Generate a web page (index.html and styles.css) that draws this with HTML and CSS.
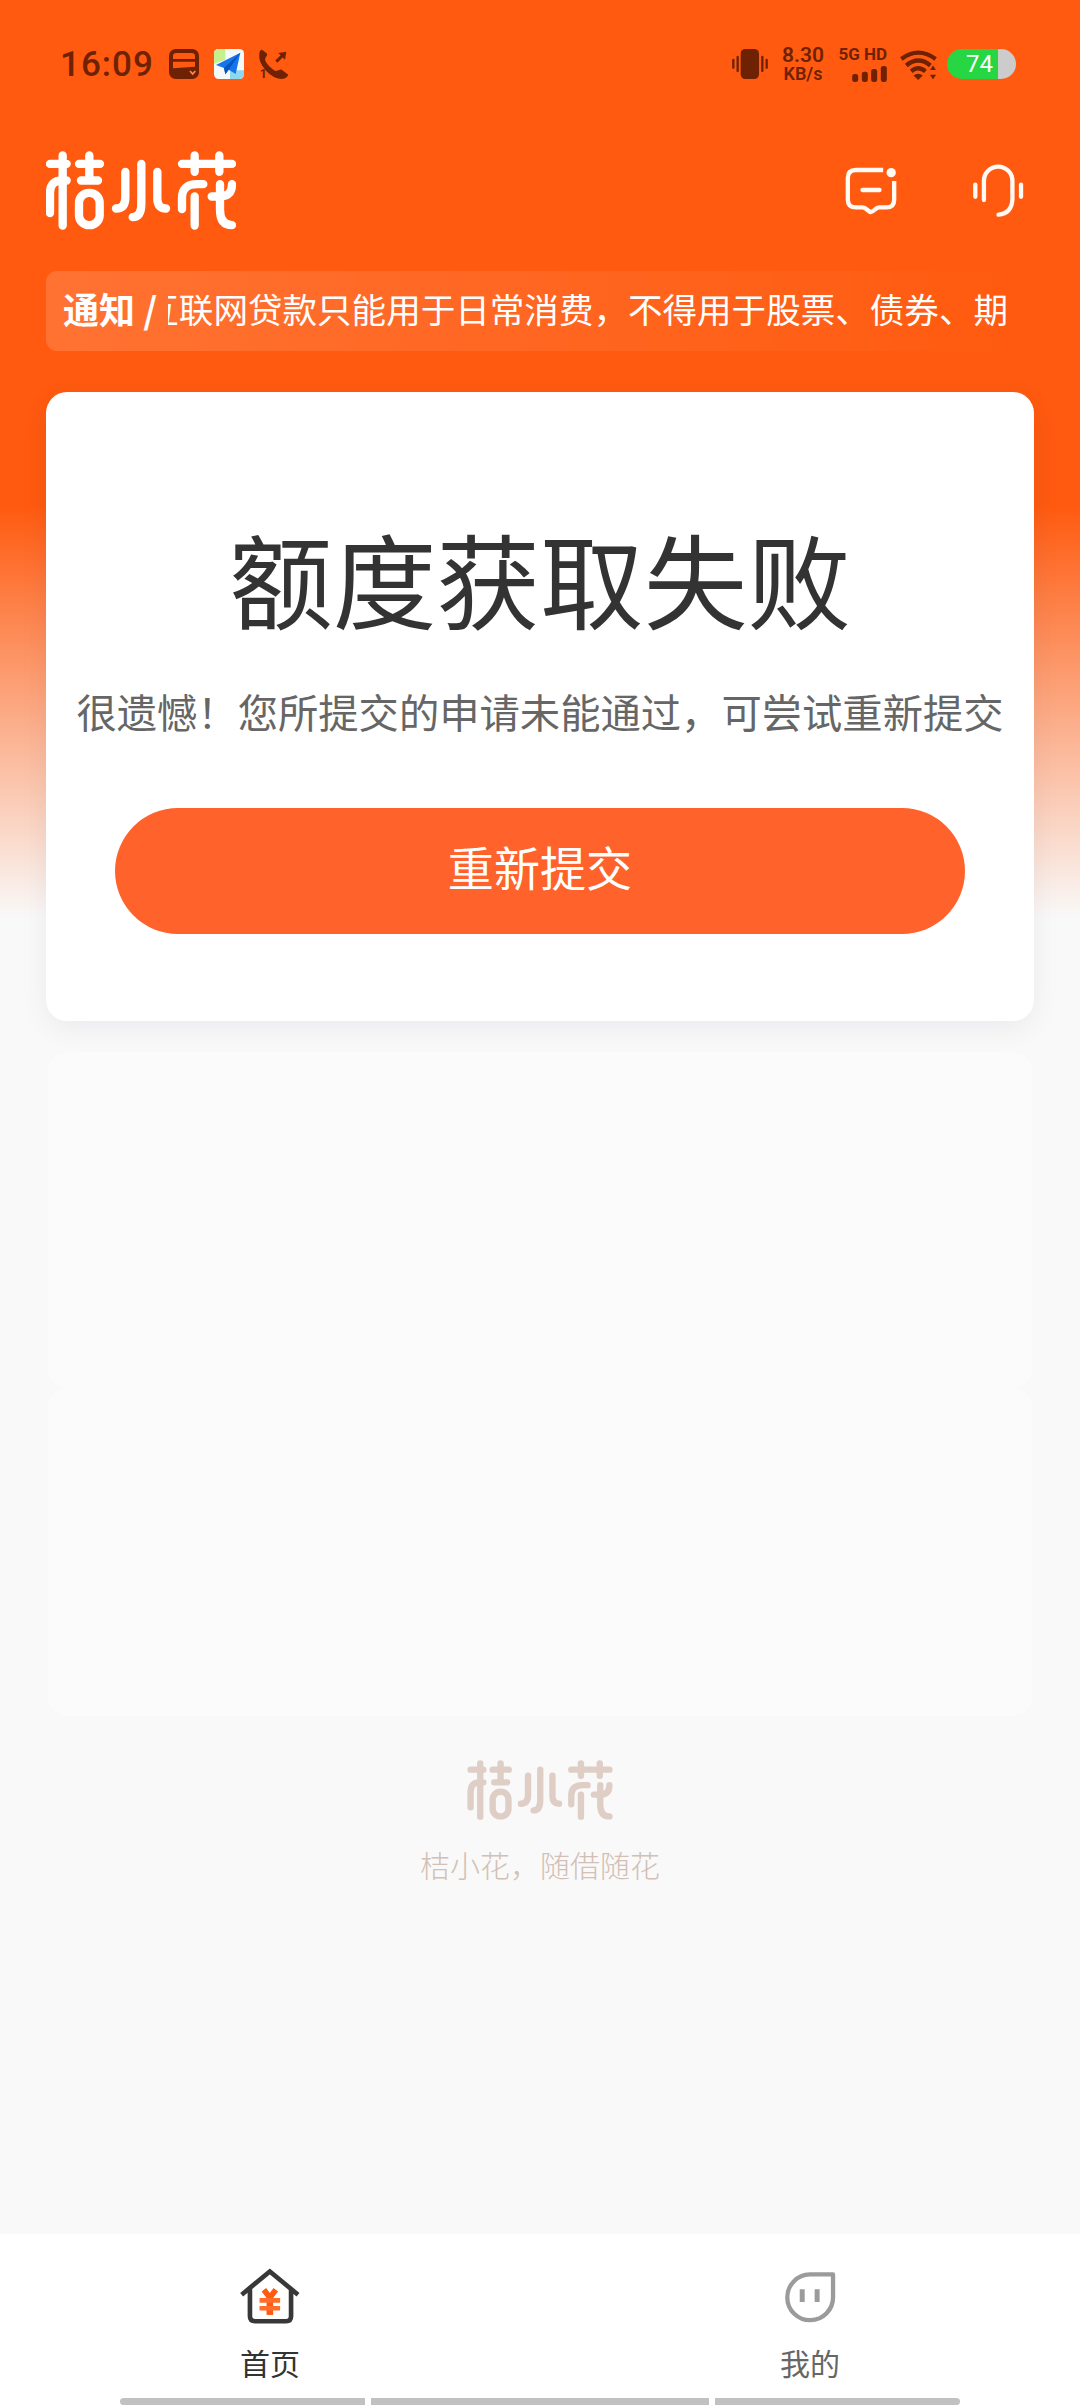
FILE: index.html
```html
<!DOCTYPE html>
<html lang="zh-CN">
<head>
<meta charset="utf-8">
<title>桔小花</title>
<link rel="stylesheet" href="styles.css">
</head>
<body>
<svg class="defs" aria-hidden="true">
  <symbol id="brand" viewBox="48 32 570 236">
    <g fill="none" stroke="currentColor" stroke-width="25" stroke-linecap="round" stroke-linejoin="round">
      <path d="M60 70H110M98 45V255M110 120H96Q60 120 60 158V218"/>
      <path d="M147 70H210M178 45V118M153 120H204"/>
      <rect x="147" y="157" width="62" height="97" rx="30"/>
      <path d="M286 94V170Q286 204 258 204M334 70V190Q334 230 308 230M382 94V174Q382 204 408 204"/>
      <path d="M456 70H606M494 45V94M568 45V94M520 131H502Q456 131 456 172V206M494 168V255"/>
      <path d="M570 131V208Q570 254 606 254M606 131Q606 168 570 168H545"/>
    </g>
  </symbol>
</svg>
<div class="page">
  <div class="status">
    <span class="clock">16:09</span>
    <svg class="ic-card" viewBox="0 0 90 90"><rect width="90" height="90" rx="20" fill="#6f2203"/><path d="M12 30V22Q12 12 22 12H68Q78 12 78 22V30ZM12 38H78V53L12 58Z" fill="#ff5a0f"/><path d="M63 66L71 75L79 66" fill="none" stroke="#ff8a50" stroke-width="5"/></svg>
    <svg class="ic-nav" viewBox="0 0 90 90"><rect width="90" height="90" rx="14" fill="#f4fafa"/><path d="M14 0H34V32L0 44V14Q0 0 14 0Z" fill="#c4f08d"/><path d="M48 64H90V76Q90 90 76 90H48Z" fill="#8ed8ed"/><path d="M79 11L6 48L30 57L34 76L44 62L65 75Z" fill="#1675ee"/><path d="M79 11L30 57L34 76L44 62Z" fill="#0756bb"/></svg>
    <svg class="ic-call" viewBox="0 0 90 90"><path d="M9 2L23 13Q27 18 20 25L18 33Q26 52 49 66L59 64Q66 58 72 65L88 77Q82 90 66 90Q43 88 21 65Q-3 39 1 13Q2 3 9 2Z" fill="#6f2203"/><path d="M52 38L72 18" stroke="#6f2203" stroke-width="9"/><path d="M58 12L82 8L78 32Z" fill="#6f2203"/><text x="2" y="87" class="sim">1</text></svg>
    <span class="spacer"></span>
    <svg class="ic-vibrate" viewBox="0 0 108 90"><rect x="26" width="55" height="90" rx="14" fill="#6f2203"/><path d="M4 33V56M17 24V66M91 24V66M104 33V56" stroke="#6f2203" stroke-width="7" stroke-linecap="round"/></svg>
    <div class="speed"><b>8.30</b><span>KB/s</span></div>
    <div class="cell"><b>5G HD</b><svg viewBox="0 0 104 48"><g fill="#6f2203"><rect y="24" width="18" height="24" rx="7"/><rect x="29" y="17" width="18" height="31" rx="7"/><rect x="57" y="9" width="18" height="39" rx="7"/><rect x="86" width="18" height="48" rx="7"/></g></svg></div>
    <svg class="ic-wifi" viewBox="0 0 110 88"><g fill="none" stroke="#6f2203" stroke-width="13"><path d="M3 24Q54-14 107 24"/><path d="M18 44Q54 14 91 44"/><path d="M33 62Q54 43 76 62"/></g><path d="M40 74Q54 64 68 74L54 88Z" fill="#6f2203"/><path d="M99 40L112 60H86ZM99 90L112 70H86Z" fill="#6f2203" stroke="#ff5a0f" stroke-width="4"/></svg>
    <div class="battery">74</div>
  </div>

  <header class="header">
    <svg class="brand"><use href="#brand"/></svg>
    <span class="spacer"></span>
    <svg class="ic-msg" viewBox="80 82 158 144"><g fill="none" stroke="#fffaf3" stroke-width="13" stroke-linejoin="round"><path d="M194 91H112Q88 91 88 115V180Q88 203 112 203H132C144 203 148 217 157 217C167 217 170 203 182 203H204Q227 203 227 180V124"/><path d="M132 151H183" stroke-linecap="round"/></g><circle cx="218" cy="99" r="14" fill="#fffaf3"/></svg>
    <svg class="ic-help" viewBox="460 68 158 166"><g fill="none" stroke="#fffaf3" stroke-width="13" stroke-linecap="round"><path d="M495 180V122A43 43 0 0 1 581 122V178Q579 220 539 224"/><path d="M469 133V170M607 133V170"/></g></svg>
  </header>

  <div class="notice">
    <b>通知 /</b>
    <div class="marquee"><span>互联网贷款只能用于日常消费，不得用于股票、债券、期</span></div>
  </div>

  <section class="card">
    <h1>额度获取失败</h1>
    <p>很遗憾！您所提交的申请未能通过，可尝试重新提交</p>
    <button class="submit">重新提交</button>
  </section>
  <div class="ghost"></div>
  <div class="ghost"></div>

  <footer class="footer">
    <svg class="brand-small"><use href="#brand"/></svg>
    <span>桔小花，随借随花</span>
  </footer>

  <nav class="tabs">
    <div class="tabrow">
      <div class="tab active">
        <svg viewBox="0 0 190 174"><path d="M8 83L93 13L178 83M33 67V148Q33 163 49 163H142Q157 163 157 148V67" fill="none" stroke="#383838" stroke-width="14"/><path d="M75 68L93 92L111 68" fill="none" stroke="#ff5a0f" stroke-width="17"/><path d="M93 88V144" stroke="#ff5a0f" stroke-width="20"/><path d="M62 100H124M62 124H124" stroke="#ff6d2a" stroke-width="14"/></svg>
        <span>首页</span>
      </div>
      <div class="tab">
        <svg viewBox="0 0 190 174"><path d="M163 22H93A69 69 0 1 0 163 90Z" fill="none" stroke="#9b9b9b" stroke-width="13" stroke-linejoin="round"/><path d="M70 67V105M115 67V105" stroke="#9b9b9b" stroke-width="15"/></svg>
        <span>我的</span>
      </div>
    </div>
    <div class="gesture"><i></i><i></i><i></i></div>
  </nav>
</div>
</body>
</html>
```
FILE: styles.css
```css
* { box-sizing: border-box; margin: 0; padding: 0; }
body { font-family: "Noto Sans CJK SC", sans-serif; background: #f9f9f9; }
svg { display: block; flex: none; overflow: visible; }
.defs { width: 0; height: 0; position: absolute; }
.spacer { flex: 1; }
.page {
  width: 1080px; height: 2408px; overflow: hidden;
  display: flex; flex-direction: column;
  background: linear-gradient(#ff5a0f 0, #ff5a0f 505px, #f9f9f9 918px);
}

.status {
  height: 128px; padding: 0 64px 0 60px; flex: none;
  display: flex; align-items: center;
  font-family: Roboto, sans-serif; color: #6f2203;
}
.clock { width: 109px; font-size: 35px; font-weight: 500; letter-spacing: 1px; }
.ic-card, .ic-nav, .ic-call { width: 30px; height: 30px; margin-right: 15px; }
.sim { font: 700 37px Roboto, sans-serif; fill: #6f2203; }
.ic-vibrate { width: 36px; height: 30px; }
.speed { width: 44px; margin-left: 13px; display: flex; flex-direction: column; align-items: center; font-weight: 600; }
.speed b { font-size: 21px; line-height: 20px; font-weight: 600; }
.speed span { font-size: 18px; line-height: 18px; }
.cell { width: 50px; margin-left: 12px; height: 35px; display: flex; flex-direction: column; align-items: flex-end; justify-content: space-between; }
.cell b { font-size: 17px; line-height: 14px; white-space: nowrap; }
.cell svg { width: 35px; height: 16px; }
.ic-wifi { width: 37px; height: 29px; margin: 2px 0 0 13px; }
.battery {
  width: 69px; height: 30px; margin-left: 10px; border-radius: 15px; padding-right: 23px;
  background: linear-gradient(90deg, #27d643 51px, #ccc 51px);
  color: #fff; font-size: 24px; line-height: 31px; text-align: right;
}

.header { height: 143px; flex: none; padding: 23px 55px 0 46px; display: flex; align-items: flex-start; }
.brand { width: 190px; height: 79px; color: #fff; }
.ic-msg { width: 53px; height: 48px; margin-top: 16px; }
.ic-help { width: 53px; height: 55px; margin: 12px 0 0 74px; }

.notice {
  height: 80px; flex: none; margin: 0 46px; padding: 0 26px 7px 17px; border-radius: 11px;
  display: flex; align-items: center;
  background: linear-gradient(90deg, rgba(255,255,255,.15), rgba(255,255,255,0));
  color: #fff; font-size: 34.56px; white-space: nowrap;
}
.notice b { width: 105px; flex: none; font-size: 36px; font-weight: 700; }
.marquee { flex: 1; overflow: hidden; display: flex; justify-content: flex-end; }

.card {
  height: 629px; flex: none; margin: 41px 46px 31px; border-radius: 21px; background: #fff;
  box-shadow: 0 8px 30px rgba(20,20,60,.06);
  display: flex; flex-direction: column; align-items: center; padding-top: 127px;
}
.card h1 { font-size: 103.68px; line-height: 116px; font-weight: 400; color: #333; }
.card p { font-size: 40.32px; line-height: 60px; margin-top: 46px; color: #666; white-space: nowrap; }
.submit {
  width: 850px; height: 126px; margin-top: 67px; padding-bottom: 10px; border: 0; border-radius: 63px;
  background: #ff622b; color: #fff; font: 46.08px/60px "Noto Sans CJK SC", sans-serif;
}
.ghost { height: 336px; flex: none; margin: 0 48px; border-radius: 20px; background: #fbfbfb; }
.ghost + .ghost { height: 328px; }

.footer { flex: 1; padding-top: 44px; display: flex; flex-direction: column; align-items: center; color: #dfcec5; }
.brand-small { width: 146px; height: 60px; }
.footer span { margin-top: 22px; font-size: 30px; line-height: 44px; font-weight: 300; color: #d2c0b6; }

.tabs { height: 174px; flex: none; background: #fff; display: flex; flex-direction: column; }
.tabrow { height: 164px; display: flex; }
.tab { flex: 1; display: flex; flex-direction: column; align-items: center; padding-top: 33px; color: #666; }
.tab svg { width: 63px; height: 58px; }
.tab span { font-size: 30px; line-height: 44px; margin-top: 15px; }
.tab.active { color: #333; }
.gesture { height: 7px; margin: 0 120px; display: grid; grid-template-columns: 245px 338px 245px; gap: 6px; }
.gesture i { background: #c1c1c1; }
.gesture i:first-child { border-radius: 4px 0 0 4px; }
.gesture i:last-child { border-radius: 0 4px 4px 0; }
```
